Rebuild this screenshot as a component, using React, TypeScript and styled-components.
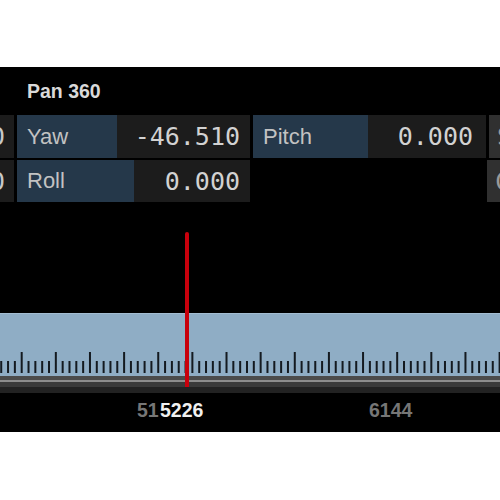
import styled, { createGlobalStyle } from 'styled-components';

const GlobalStyle = createGlobalStyle`
  html, body {
    margin: 0;
    padding: 0;
    background: #ffffff;
  }
  body {
    font-family: 'Liberation Sans', Arial, sans-serif;
  }
`;

const MINOR_STEP = 6.827;
const FIRST_MAJOR = 20.7;

const ticks = Array.from({ length: 75 }, (_, i) => {
  const x = FIRST_MAJOR - MINOR_STEP * 3 + i * MINOR_STEP;
  return { x, major: i % 5 === 3 };
});

const App = () => {
  return (
    <Page>
      <GlobalStyle />
      <Panel>
        <Header>
          <Title>Pan 360</Title>
        </Header>
        <Rows>
          <Row $height={43}>
            <Stub $side="left">
              <StubGlyph $side="left">0</StubGlyph>
            </Stub>
            <Param>
              <Label $width={100}>Yaw</Label>
              <Value>-46.510</Value>
            </Param>
            <Param>
              <Label $width={115}>Pitch</Label>
              <Value $pad={13}>0.000</Value>
            </Param>
            <Stub $side="right">
              <StubGlyph $side="right">S</StubGlyph>
            </Stub>
          </Row>
          <Row $height={42}>
            <Stub $side="left">
              <StubGlyph $side="left">0</StubGlyph>
            </Stub>
            <Param>
              <Label $width={117}>Roll</Label>
              <Value>0.000</Value>
            </Param>
            <Filler />
            <Stub $side="right">
              <StubGlyph $side="right">C</StubGlyph>
            </Stub>
          </Row>
        </Rows>
        <Timeline>
          <Band>
            <svg width="500" height="62" viewBox="0 0 500 62">
              {ticks.map((t, i) => (
                <rect
                  key={i}
                  x={t.x}
                  y={t.major ? 38 : 47}
                  width={2}
                  height={t.major ? 21 : 12}
                  fill="#141a20"
                />
              ))}
            </svg>
          </Band>
          <Strip $h={4} $c="#4b4b4b" />
          <Strip $h={2} $c="#8c8c8c" />
          <Strip $h={5} $c="#3a3a3a" />
          <Strip $h={6} $c="#222222" />
          <Labels>
            <ClippedLabel style={{ left: 137 }}>5120</ClippedLabel>
            <FrameLabel style={{ left: 369 }}>6144</FrameLabel>
            <CurrentLabel style={{ left: 160 }}>5226</CurrentLabel>
          </Labels>
          <Playhead />
        </Timeline>
      </Panel>
    </Page>
  );
};

const Page = styled.div`
  padding-top: 67px;
  width: 500px;
  height: 500px;
  box-sizing: border-box;
`;

const Panel = styled.div`
  background: #000000;
  height: 365px;
  display: flex;
  flex-direction: column;
  overflow: hidden;
`;

const Header = styled.div`
  height: 48px;
  padding-left: 27px;
  display: flex;
  align-items: center;
`;

const Title = styled.span`
  font-size: 19.5px;
  font-weight: bold;
  color: #d9d9d9;
`;

const Rows = styled.div`
  display: flex;
  flex-direction: column;
  gap: 2px;
`;

const Row = styled.div<{ $height: number }>`
  display: flex;
  gap: 3px;
  height: ${(p) => p.$height}px;
`;

const Stub = styled.div<{ $side: 'left' | 'right' }>`
  width: ${(p) => (p.$side === 'left' ? 14 : 13)}px;
  flex: none;
  background: ${(p) => (p.$side === 'left' ? '#1c1c1c' : '#303030')};
  display: flex;
  align-items: center;
  justify-content: ${(p) => (p.$side === 'left' ? 'flex-end' : 'flex-start')};
  overflow: hidden;
  margin-left: ${(p) => (p.$side === 'right' ? 'auto' : '0')};
`;

const StubGlyph = styled.span<{ $side: 'left' | 'right' }>`
  font-family: 'DejaVu Sans Mono', monospace;
  font-size: 25px;
  color: ${(p) => (p.$side === 'left' ? '#c8c8c8' : '#9a9a9a')};
  margin-right: ${(p) => (p.$side === 'left' ? '9px' : '0')};
  margin-left: ${(p) => (p.$side === 'right' ? '8px' : '0')};
  flex: none;
`;

const Param = styled.div`
  width: 233px;
  flex: none;
  display: flex;
`;

const Label = styled.div<{ $width: number }>`
  width: ${(p) => p.$width}px;
  flex: none;
  background: #25384a;
  color: #c2c2c2;
  font-size: 22px;
  padding-left: 10px;
  box-sizing: border-box;
  display: flex;
  align-items: center;
`;

const Value = styled.div<{ $pad?: number }>`
  flex: 1;
  background: #1c1c1c;
  color: #d2d2d2;
  font-family: 'DejaVu Sans Mono', monospace;
  font-size: 25px;
  display: flex;
  align-items: center;
  justify-content: flex-end;
  padding-right: ${(p) => p.$pad ?? 10}px;
`;

const Filler = styled.div`
  flex: 1;
`;

const Timeline = styled.div`
  position: relative;
  padding-top: 111px;
  display: flex;
  flex-direction: column;
  flex: 1;
`;

const Band = styled.div`
  height: 63px;
  background: #8fadc5;
  border-top: 1px solid #a3bdd1;
  box-sizing: border-box;
  display: flex;
  align-items: flex-end;

  svg {
    display: block;
  }
`;

const Strip = styled.div<{ $h: number; $c: string }>`
  height: ${(p) => p.$h}px;
  background: ${(p) => p.$c};
`;

const Labels = styled.div`
  position: relative;
  flex: 1;
`;

const FrameLabel = styled.span`
  position: absolute;
  top: 6px;
  font-size: 19.5px;
  font-weight: bold;
  color: #767676;
  white-space: nowrap;
`;

const ClippedLabel = styled(FrameLabel)`
  width: 22px;
  overflow: hidden;
`;

const CurrentLabel = styled(FrameLabel)`
  color: #f0f0f0;
`;

const Playhead = styled.div`
  position: absolute;
  left: 184.5px;
  top: 30px;
  width: 4px;
  height: 155px;
  background: #c8000c;
  border-radius: 2px 2px 0 0;
`;

export default App;
